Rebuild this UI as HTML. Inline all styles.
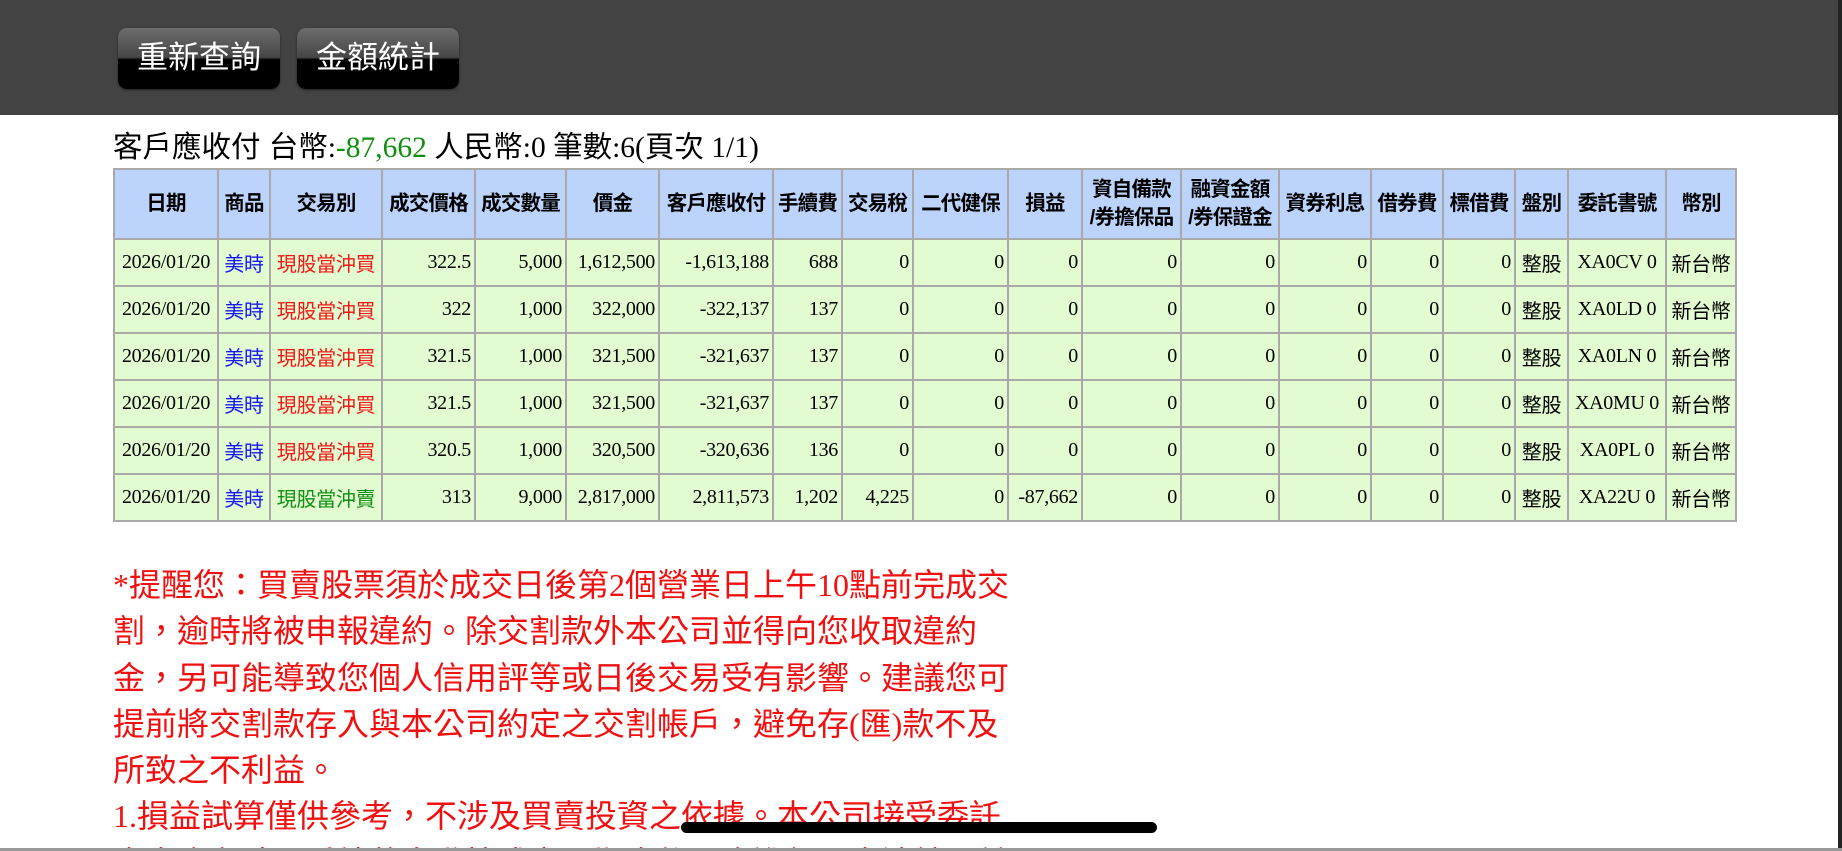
<!DOCTYPE html>
<html><head><meta charset="utf-8"><style>
*{margin:0;padding:0;box-sizing:border-box}
html,body{width:1842px;height:851px;overflow:hidden;background:#fff}
body{position:relative;font-family:"Liberation Serif","Noto Serif CJK SC","Noto Sans CJK TC",serif}
.top{position:absolute;left:0;top:0;width:1842px;height:115px;background:#434343}
.btn{position:absolute;top:28px;height:61px;width:162px;border-radius:9px;background:linear-gradient(#6c6c6c 0%,#474747 48%,#000 52%,#000 100%);color:#fff;font-family:"Liberation Sans","Noto Sans CJK TC",sans-serif;font-size:31px;text-align:center;line-height:60px;letter-spacing:0px;box-shadow:0 1px 2px #222}
.sum{position:absolute;left:113px;top:130px;font-size:29.5px;line-height:36px;color:#000;font-family:"Liberation Serif","Noto Sans CJK TC",serif;white-space:nowrap}
.sum .cjk{font-family:"Liberation Sans","Noto Sans CJK TC",sans-serif}
table{position:absolute;left:113px;top:168px;border-collapse:collapse;table-layout:fixed;width:1622px}
td,th{border:2px solid #a9a9a9;font-size:20px;height:47px;padding:0 3px;white-space:nowrap;overflow:hidden}
th{background:#bcd3fc;height:70px;font-family:"Liberation Sans","Noto Sans CJK TC",sans-serif;font-weight:bold;font-size:20.5px;text-align:center;line-height:28px;padding:0;letter-spacing:-0.8px}
td{background:#e3fbd1;text-align:right;font-family:"Liberation Serif","Noto Sans CJK TC",serif;letter-spacing:-0.3px}
td.c{text-align:center}
.k{font-family:"Liberation Sans","Noto Sans CJK TC",sans-serif}
.b{color:#1818f0}.r{color:#f01818}.g{color:#109010}
.note{position:absolute;left:113px;top:562px;color:#f01010;font-size:32px;line-height:46.3px;font-family:"Liberation Serif","Noto Sans CJK TC",serif;white-space:nowrap}
.bar{position:absolute;left:681px;top:822px;width:476px;height:11px;border-radius:6px;background:#000}
.rb{position:absolute;left:1838px;top:0;width:4px;height:851px;background:#222}
.bb{position:absolute;left:0;top:848px;width:1842px;height:3px;background:#999}
</style></head><body>
<div class="top"></div>
<div class="btn" style="left:118px">重新查詢</div>
<div class="btn" style="left:297px">金額統計</div>
<div class="sum"><span class="cjk">客戶應收付 台幣</span>:<span class="g">-87,662</span> <span class="cjk">人民幣</span>:0 <span class="cjk">筆數</span>:6(<span class="cjk">頁次</span> 1/1)</div>
<table>
<colgroup><col style="width:104px"><col style="width:52px"><col style="width:112px"><col style="width:93px"><col style="width:91px"><col style="width:93px"><col style="width:114px"><col style="width:69px"><col style="width:71px"><col style="width:95px"><col style="width:74px"><col style="width:99px"><col style="width:98px"><col style="width:92px"><col style="width:72px"><col style="width:72px"><col style="width:53px"><col style="width:98px"><col style="width:70px"></colgroup>
<tr><th>日期</th><th>商品</th><th>交易別</th><th>成交價格</th><th>成交數量</th><th>價金</th><th>客戶應收付</th><th>手續費</th><th>交易稅</th><th>二代健保</th><th>損益</th><th>資自備款<br>/券擔保品</th><th>融資金額<br>/券保證金</th><th>資券利息</th><th>借券費</th><th>標借費</th><th>盤別</th><th>委託書號</th><th>幣別</th></tr>
<tr><td class="c">2026/01/20</td><td class="c k b">美時</td><td class="c k r">現股當沖買</td><td>322.5</td><td>5,000</td><td>1,612,500</td><td>-1,613,188</td><td>688</td><td>0</td><td>0</td><td>0</td><td>0</td><td>0</td><td>0</td><td>0</td><td>0</td><td class="c k">整股</td><td class="c">XA0CV 0</td><td class="c k">新台幣</td></tr>
<tr><td class="c">2026/01/20</td><td class="c k b">美時</td><td class="c k r">現股當沖買</td><td>322</td><td>1,000</td><td>322,000</td><td>-322,137</td><td>137</td><td>0</td><td>0</td><td>0</td><td>0</td><td>0</td><td>0</td><td>0</td><td>0</td><td class="c k">整股</td><td class="c">XA0LD 0</td><td class="c k">新台幣</td></tr>
<tr><td class="c">2026/01/20</td><td class="c k b">美時</td><td class="c k r">現股當沖買</td><td>321.5</td><td>1,000</td><td>321,500</td><td>-321,637</td><td>137</td><td>0</td><td>0</td><td>0</td><td>0</td><td>0</td><td>0</td><td>0</td><td>0</td><td class="c k">整股</td><td class="c">XA0LN 0</td><td class="c k">新台幣</td></tr>
<tr><td class="c">2026/01/20</td><td class="c k b">美時</td><td class="c k r">現股當沖買</td><td>321.5</td><td>1,000</td><td>321,500</td><td>-321,637</td><td>137</td><td>0</td><td>0</td><td>0</td><td>0</td><td>0</td><td>0</td><td>0</td><td>0</td><td class="c k">整股</td><td class="c">XA0MU 0</td><td class="c k">新台幣</td></tr>
<tr><td class="c">2026/01/20</td><td class="c k b">美時</td><td class="c k r">現股當沖買</td><td>320.5</td><td>1,000</td><td>320,500</td><td>-320,636</td><td>136</td><td>0</td><td>0</td><td>0</td><td>0</td><td>0</td><td>0</td><td>0</td><td>0</td><td class="c k">整股</td><td class="c">XA0PL 0</td><td class="c k">新台幣</td></tr>
<tr><td class="c">2026/01/20</td><td class="c k b">美時</td><td class="c k g">現股當沖賣</td><td>313</td><td>9,000</td><td>2,817,000</td><td>2,811,573</td><td>1,202</td><td>4,225</td><td>0</td><td>-87,662</td><td>0</td><td>0</td><td>0</td><td>0</td><td>0</td><td class="c k">整股</td><td class="c">XA22U 0</td><td class="c k">新台幣</td></tr>
</table>
<div class="note">*提醒您：買賣股票須於成交日後第2個營業日上午10點前完成交<br>割，逾時將被申報違約。除交割款外本公司並得向您收取違約<br>金，另可能導致您個人信用評等或日後交易受有影響。建議您可<br>提前將交割款存入與本公司約定之交割帳戶，避免存(匯)款不及<br>所致之不利益。<br>1.損益試算僅供參考，不涉及買賣投資之依據。本公司接受委託<br>賣出庫存時，手續將自動按成交日期先後順序進行買賣沖銷，並</div>
<div class="bar"></div>
<div class="rb"></div>
<div class="bb"></div>
</body></html>
